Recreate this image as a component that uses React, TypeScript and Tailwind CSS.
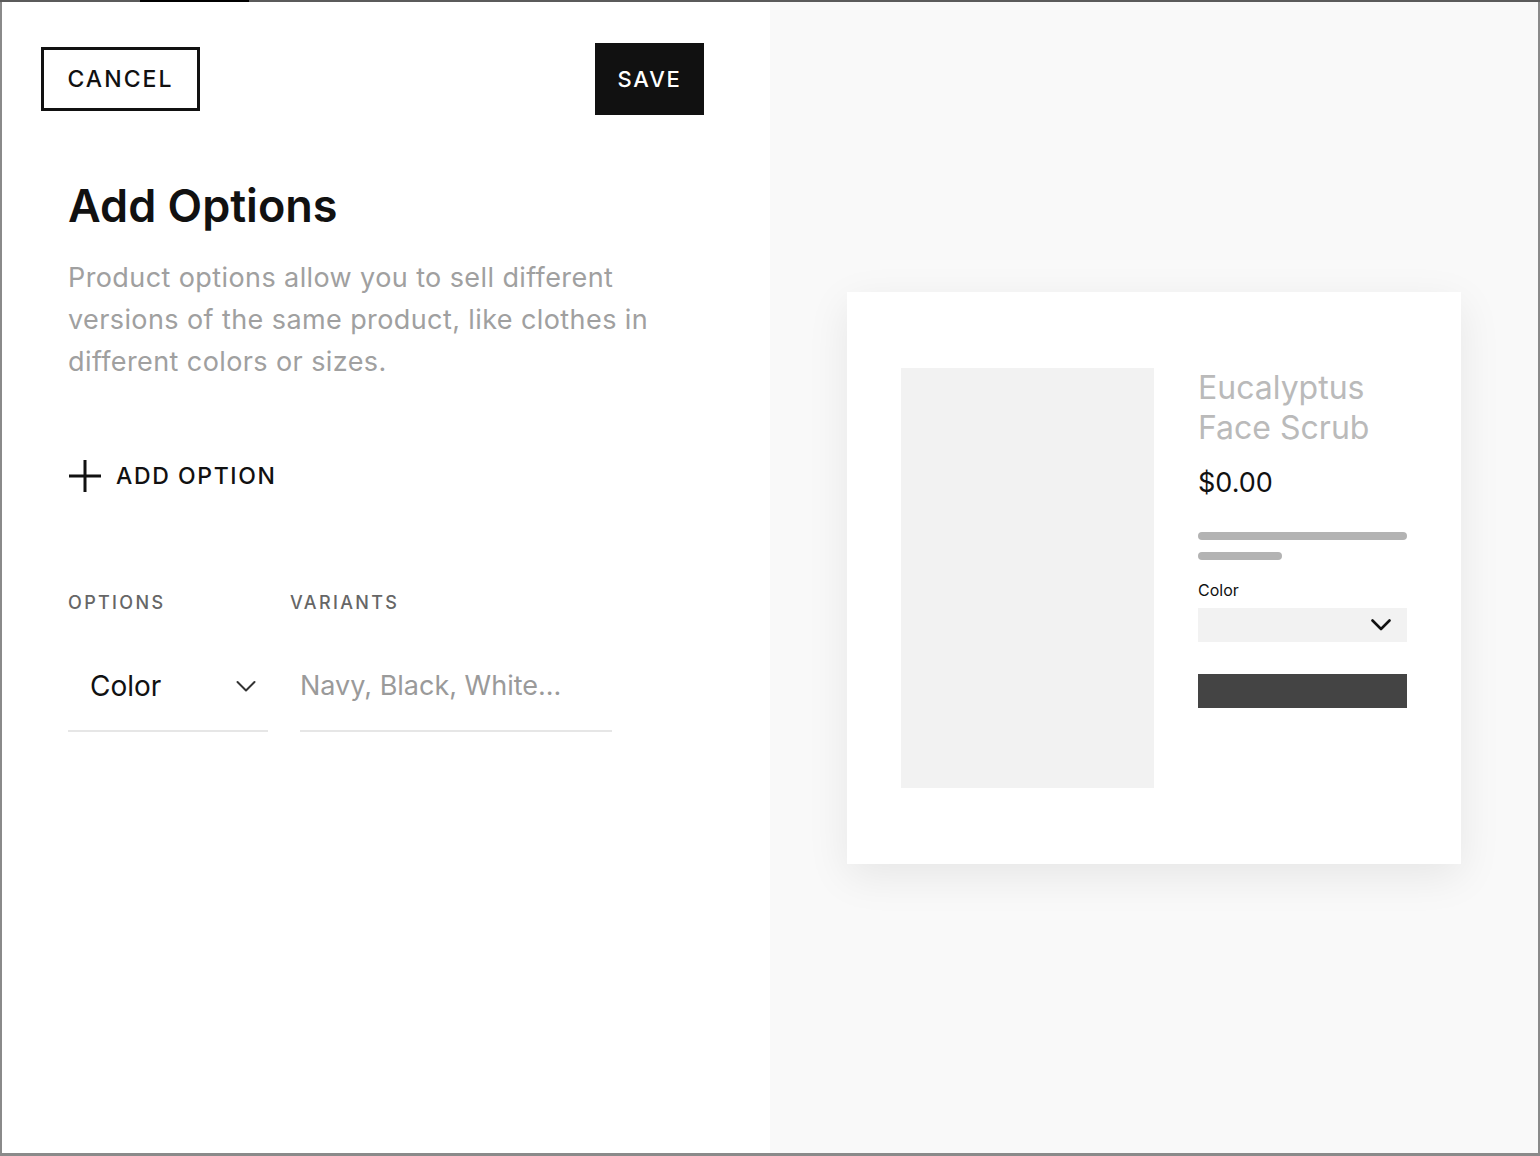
import React from 'react';

function Chevron({ className, strokeWidth = 2 }: { className?: string; strokeWidth?: number }) {
	return (
		<svg viewBox="0 0 20 12" fill="none" className={className}>
			<path d="M1.5 1.5 L10 10 L18.5 1.5" stroke="currentColor" strokeWidth={strokeWidth} strokeLinecap="round" strokeLinejoin="round" />
		</svg>
	);
}

function PlusIcon() {
	return (
		<svg viewBox="0 0 34 34" className="h-[34px] w-[34px] text-[#111]" fill="none">
			<path d="M17 1 V33 M1 17 H33" stroke="currentColor" strokeWidth="3" />
		</svg>
	);
}

function EditorPanel() {
	return (
		<div className="flex h-full w-[768px] shrink-0 flex-col bg-white">
			{/* header */}
			<div className="mt-[41px] flex h-[72px] items-center justify-between pl-[39px] pr-[66px]">
				<button className="flex h-[64px] w-[159px] items-center justify-center border-[3px] border-[#111] text-[23px] font-medium tracking-[0.09em] text-[#111]">
					CANCEL
				</button>
				<button className="flex h-[72px] w-[109px] items-center justify-center bg-[#111] text-[22px] font-medium tracking-[0.08em] text-white">
					SAVE
				</button>
			</div>

			<div className="pl-[66px]">
				<h1 className="mt-[65px] text-[45px] font-semibold leading-[52px] text-[#111]">Add Options</h1>
				<p className="mt-[25px] w-[610px] text-[27px] leading-[42px] tracking-[0.015em] text-[#a0a0a0]">
					Product options allow you to sell different versions of the same product, like clothes in different colors or sizes.
				</p>

				<button className="mt-[76px] flex h-[34px] items-center gap-[14px]">
					<PlusIcon />
					<span className="text-[23px] font-medium tracking-[0.07em] text-[#111]">ADD OPTION</span>
				</button>

				<div className="mt-[100px] flex text-[18px] font-medium leading-[20px] tracking-[0.13em] text-[#666]">
					<span className="w-[222px]">OPTIONS</span>
					<span>VARIANTS</span>
				</div>

				<div className="mt-[39px] flex gap-[32px]">
					<div className="flex h-[80px] w-[200px] items-center justify-between border-b-2 border-[#e6e6e6] pb-[10px] pl-[22px] pr-[12px]">
						<span className="text-[28px] text-[#111]">Color</span>
						<Chevron className="h-[13px] w-[20px] text-[#333]" />
					</div>
					<div className="flex h-[80px] w-[312px] items-center border-b-2 border-[#e6e6e6] pb-[10px]">
						<span className="text-[27px] text-[#9a9a9a]">Navy, Black, White...</span>
					</div>
				</div>
			</div>
		</div>
	);
}

function PreviewPanel() {
	return (
		<div className="flex h-full flex-1 items-center justify-center bg-[#f9f9f9]">
			<div className="flex h-[572px] w-[614px] bg-white pl-[54px] pt-[76px] shadow-[0_12px_40px_rgba(0,0,0,0.08)]">
				<div className="h-[420px] w-[253px] bg-[#f2f2f2]" />
				<div className="ml-[44px] flex w-[209px] flex-col">
					<div className="text-[32px] leading-[40px] text-[#bababa]">
						Eucalyptus
						<br />
						Face Scrub
					</div>
					<div className="mt-[21px] text-[27px] leading-[28px] text-[#111]">$0.00</div>
					<div className="mt-[35px] h-[8px] w-[209px] rounded-full bg-[#b3b3b3]" />
					<div className="mt-[12px] h-[8px] w-[84px] rounded-full bg-[#b3b3b3]" />
					<div className="mt-[20px] text-[16px] leading-[20px] text-[#111]">Color</div>
					<div className="mt-[8px] flex h-[34px] items-center justify-end bg-[#f2f2f2] pr-[16px]">
						<Chevron className="h-[12px] w-[20px] text-[#111]" strokeWidth={2.6} />
					</div>
					<div className="mt-[32px] h-[34px] bg-[#444]" />
				</div>
			</div>
		</div>
	);
}

export default function App() {
	return (
		<div className="flex h-[1156px] w-[1540px] flex-col overflow-hidden bg-[#8a8a8a] font-['Inter',sans-serif]">
			<div className="flex h-[2px] shrink-0 bg-[#5b5b5b]">
				<div className="ml-[140px] w-[109px] bg-black" />
			</div>
			<div className="flex min-h-0 flex-1 pl-[2px] pr-[2px]">
				<EditorPanel />
				<PreviewPanel />
			</div>
			<div className="h-[3px] shrink-0 bg-[#8a8a8a]" />
		</div>
	);
}
